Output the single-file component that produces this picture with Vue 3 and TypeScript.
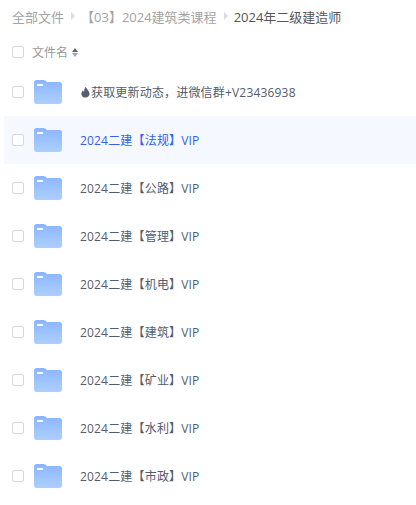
<script setup lang="ts">
const crumbs = ['全部文件', '【03】2024建筑类课程']
const current = '2024年二级建造师'

const rows = [
  { name: '获取更新动态，进微信群+V23436938', fire: true },
  { name: '2024二建【法规】VIP', active: true },
  { name: '2024二建【公路】VIP' },
  { name: '2024二建【管理】VIP' },
  { name: '2024二建【机电】VIP' },
  { name: '2024二建【建筑】VIP' },
  { name: '2024二建【矿业】VIP' },
  { name: '2024二建【水利】VIP' },
  { name: '2024二建【市政】VIP' },
]
</script>

<template>
  <div class="page">
    <div class="crumbs">
      <template v-for="c in crumbs" :key="c">
        <span class="crumb">{{ c }}</span>
        <i class="sep"></i>
      </template>
      <span class="crumb-current">{{ current }}</span>
    </div>

    <div class="head">
      <span class="check"></span>
      <span class="head-name">文件名</span>
      <span class="sort">
        <i class="sort-up"></i>
        <i class="sort-down"></i>
      </span>
    </div>

    <div class="list">
      <div v-for="row in rows" :key="row.name" class="row" :class="{ active: row.active }">
        <span class="check"></span>
        <svg class="folder" width="28" height="24" viewBox="0 0 28 24">
          <defs>
            <linearGradient id="folderFill" x1="0" y1="0" x2="0" y2="1">
              <stop offset="0" stop-color="#8ab6ff" />
              <stop offset="1" stop-color="#add0ff" />
            </linearGradient>
          </defs>
          <path
            d="M2.5 0H9.5C10.4 0 11 .3 11.6 .8L13 2H25.5C27 2 28 3 28 4.5V21.5C28 23 27 24 25.5 24H2.5C1 24 0 23 0 21.5V2.5C0 1 1 0 2.5 0Z"
            fill="url(#folderFill)"
          />
          <rect x="3" y="4" width="6" height="2" rx="0.5" fill="#fff" />
        </svg>
        <span class="name">
          <svg v-if="row.fire" class="fire" width="9" height="12" viewBox="0 0 11 14">
            <path
              d="M5.8 0.5C6.2 3 10.5 5.5 10.5 9.2C10.5 12 8.2 13.8 5.5 13.8C2.8 13.8 0.5 12 0.5 9.3C0.5 7.2 1.7 5.8 2.6 4.8C2.8 6 3.3 6.6 3.9 6.8C3.7 4.4 4.4 2 5.8 0.5Z"
              fill="#55606e"
            />
          </svg>{{ row.name }}
        </span>
      </div>
    </div>
  </div>
</template>

<style>
html,
body {
  margin: 0;
  background: #fff;
}
</style>

<style scoped>
.page {
  width: 416px;
  height: 505px;
  overflow: hidden;
  font-family: 'Open Sans', 'Noto Sans CJK SC', sans-serif;
  color: #424e67;
}

.crumbs {
  display: flex;
  align-items: center;
  height: 32px;
  margin-bottom: 4px;
  padding-left: 12px;
  font-size: 13px;
  white-space: nowrap;
}

.crumb {
  color: #a3a3a3;
}

.crumb-current {
  color: #555;
}

.sep {
  width: 0;
  height: 0;
  margin: 0 6px 0 7px;
  border-left: 4px solid #d9dce0;
  border-top: 4px solid transparent;
  border-bottom: 4px solid transparent;
}

.head {
  display: flex;
  align-items: center;
  height: 32px;
  padding-left: 12px;
}

.head-name {
  margin-left: 8px;
  font-size: 12px;
  color: #999;
}

.sort {
  display: flex;
  flex-direction: column;
  gap: 1px;
  margin-left: 4px;
}

.sort-up,
.sort-down {
  width: 0;
  height: 0;
  border-left: 3.5px solid transparent;
  border-right: 3.5px solid transparent;
}

.sort-up {
  border-bottom: 4px solid #666;
}

.sort-down {
  border-top: 4px solid #a6a6a6;
}

.check {
  box-sizing: border-box;
  flex: none;
  width: 12px;
  height: 12px;
  border: 1px solid #d9d9d9;
  border-radius: 2px;
  background: #fff;
}

.list {
  margin-left: 4px;
}

.row {
  display: flex;
  align-items: center;
  height: 48px;
  padding-left: 8px;
}

.row.active {
  background: #f5f8ff;
}

.row.active .name {
  color: #3060f0;
}

.folder {
  flex: none;
  margin-left: 10px;
}

.name {
  display: flex;
  align-items: center;
  margin-left: 18px;
  font-size: 12px;
  letter-spacing: 0.18px;
  color: #525c6e;
  white-space: nowrap;
}

.fire {
  flex: none;
  margin: 0 1px 0 1px;
}
</style>
